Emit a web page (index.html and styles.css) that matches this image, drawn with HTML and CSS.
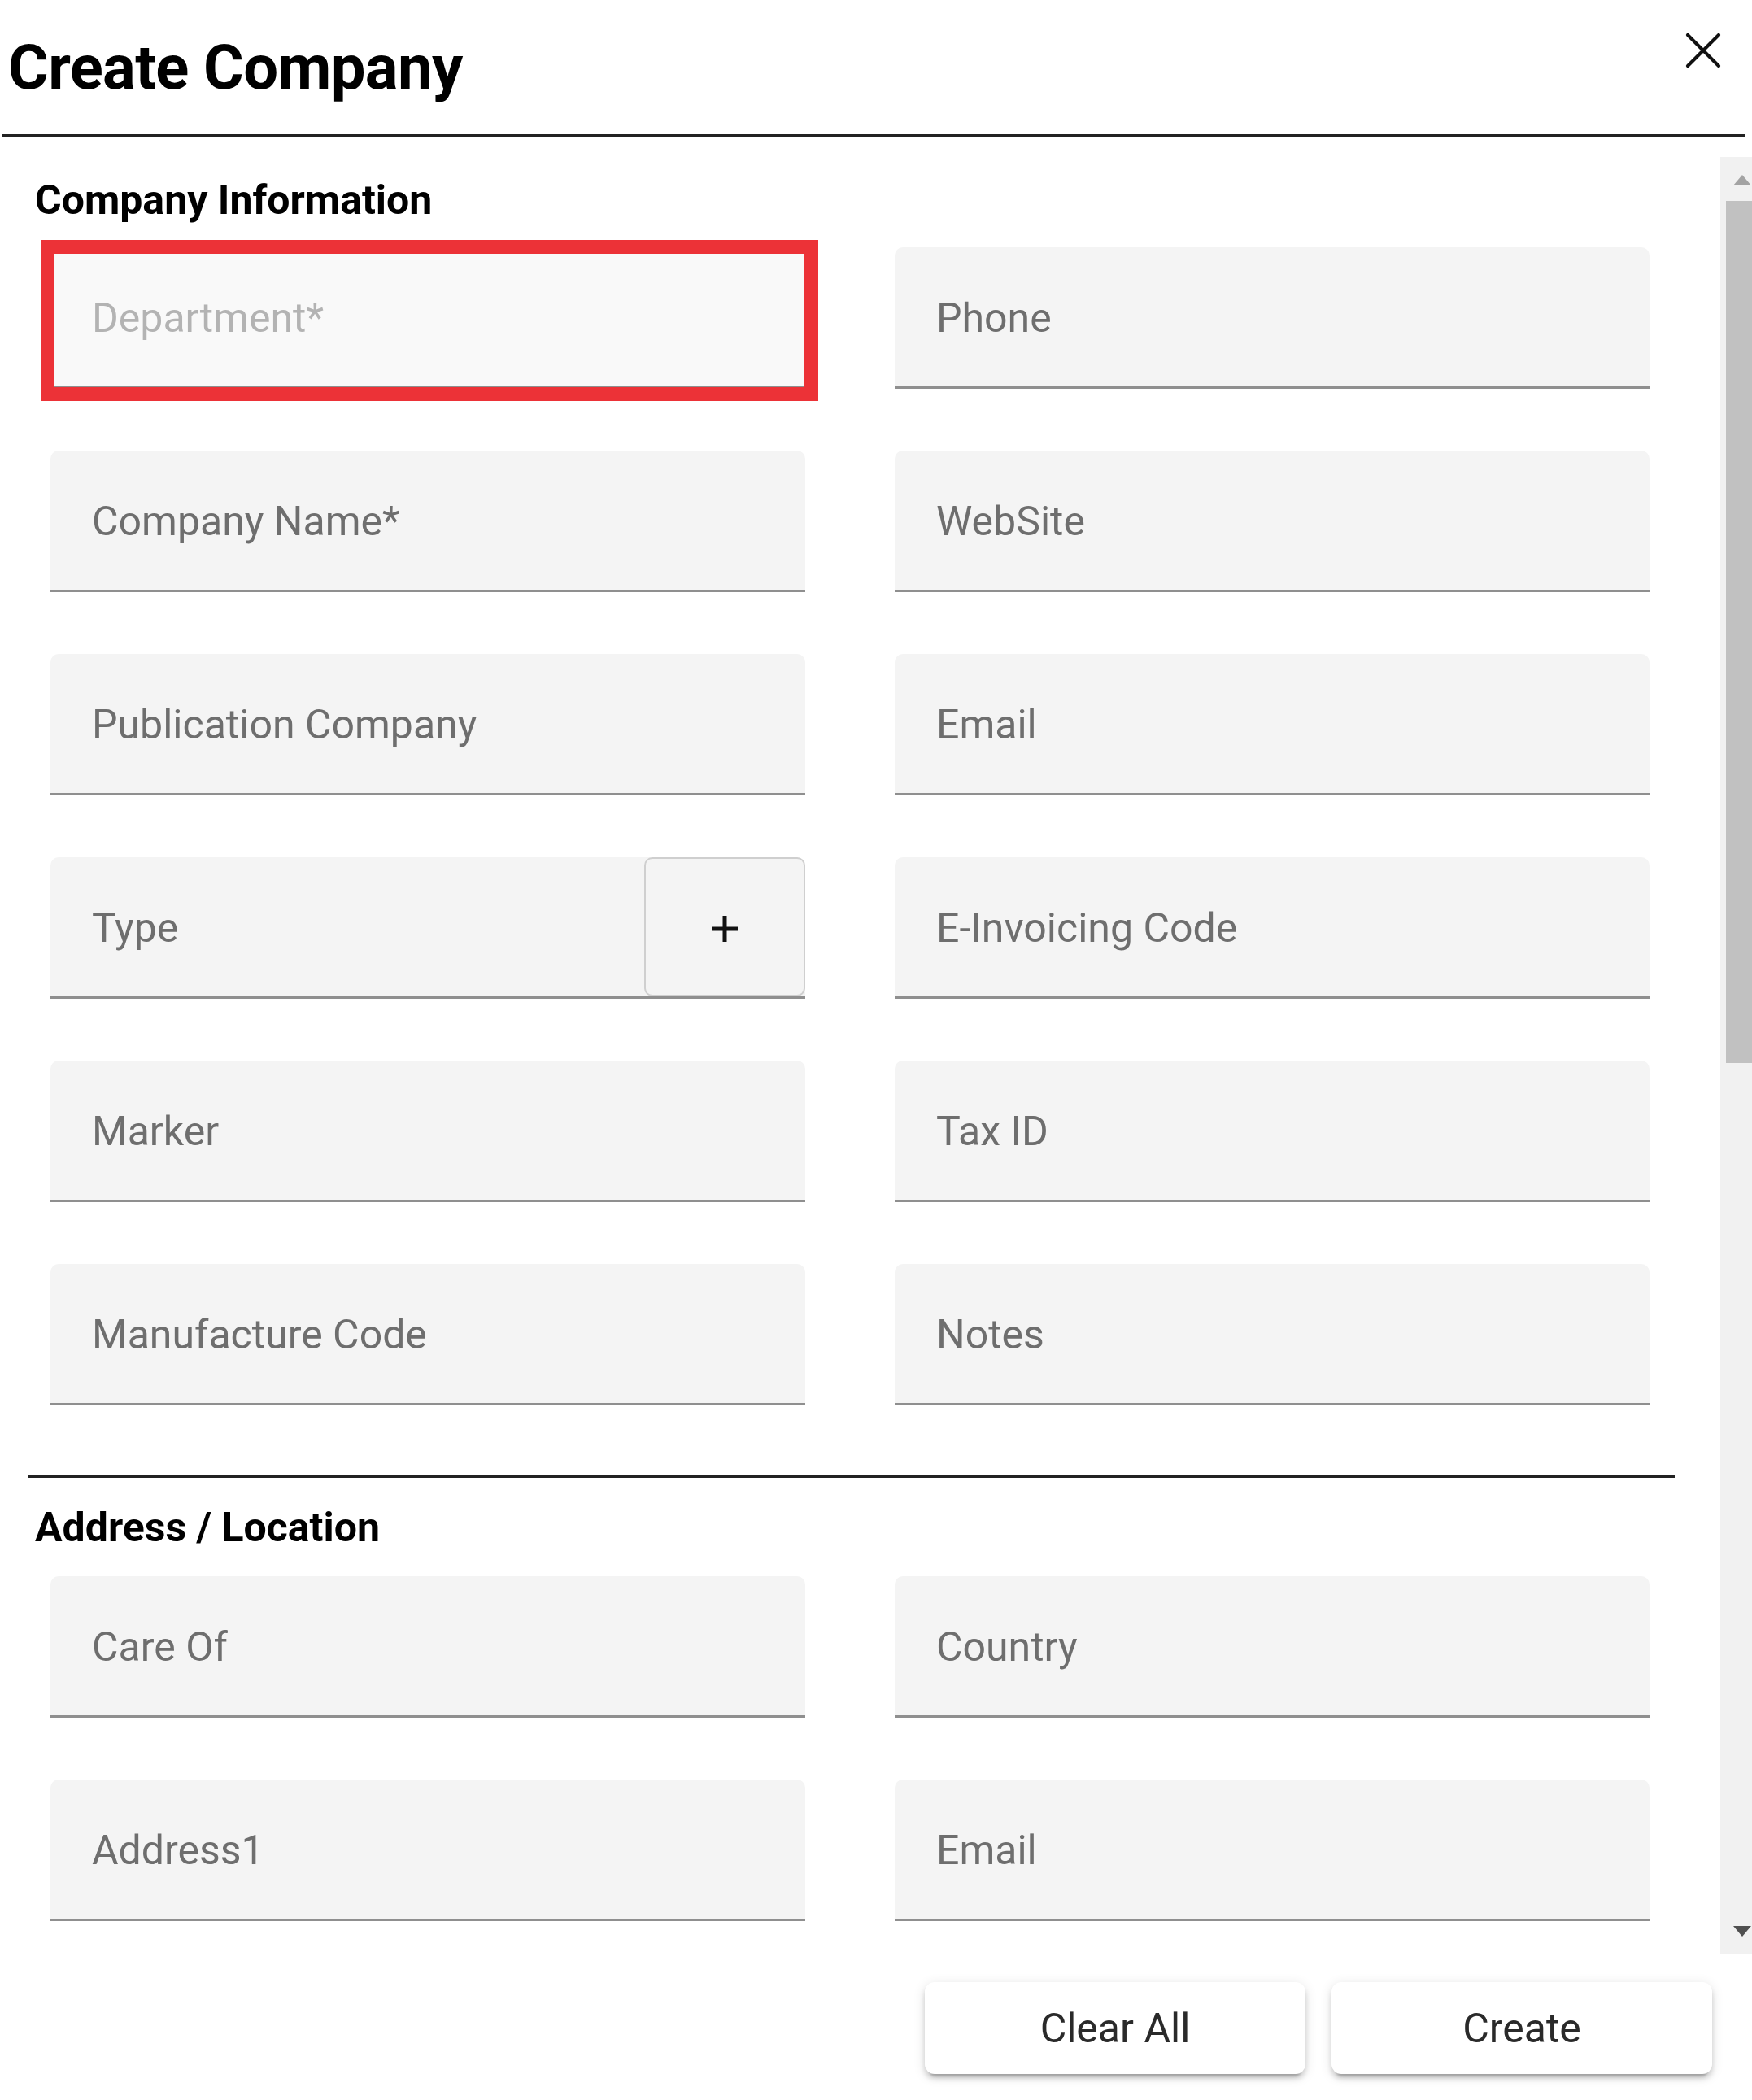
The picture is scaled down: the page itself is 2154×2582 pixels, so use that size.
FILE: index.html
```html
<!DOCTYPE html>
<html lang="en">
<head>
<meta charset="utf-8">
<title>Create Company</title>
<link rel="stylesheet" href="styles.css">
</head>
<body>
<div class="dialog">
  <header class="dlg-head">
    <h1 class="dlg-title">Create Company</h1>
    <button class="close-btn" aria-label="Close">
      <svg width="44" height="44" viewBox="0 0 44 44"><path d="M3 3 L41 41 M41 3 L3 41" stroke="#111" stroke-width="4.2" stroke-linecap="round" fill="none"/></svg>
    </button>
  </header>

  <div class="dlg-body">
    <div class="scroll-area">
      <h2 class="section-title">Company Information</h2>
      <div class="field-grid">
        <div class="field field-disabled">
          <span class="field-label">Department*</span>
          <span class="highlight-box"></span>
        </div>
        <div class="field"><span class="field-label">Phone</span></div>

        <div class="field"><span class="field-label">Company Name*</span></div>
        <div class="field"><span class="field-label">WebSite</span></div>

        <div class="field"><span class="field-label">Publication Company</span></div>
        <div class="field"><span class="field-label">Email</span></div>

        <div class="field">
          <span class="field-label">Type</span>
          <button class="add-btn" aria-label="Add type">
            <svg width="34" height="34" viewBox="0 0 34 34"><path d="M17 1 V33 M1 17 H33" stroke="#111" stroke-width="5" fill="none"/></svg>
          </button>
        </div>
        <div class="field"><span class="field-label">E-Invoicing Code</span></div>

        <div class="field"><span class="field-label">Marker</span></div>
        <div class="field"><span class="field-label">Tax ID</span></div>

        <div class="field"><span class="field-label">Manufacture Code</span></div>
        <div class="field"><span class="field-label">Notes</span></div>
      </div>

      <hr class="section-sep">

      <h2 class="section-title">Address / Location</h2>
      <div class="field-grid">
        <div class="field"><span class="field-label">Care Of</span></div>
        <div class="field"><span class="field-label">Country</span></div>

        <div class="field"><span class="field-label">Address1</span></div>
        <div class="field"><span class="field-label">Email</span></div>
      </div>
    </div>

    <div class="scrollbar">
      <div class="sb-up"><span class="tri-up"></span></div>
      <div class="sb-thumb"></div>
      <div class="sb-rest"></div>
      <div class="sb-down"><span class="tri-down"></span></div>
    </div>
  </div>

  <footer class="dlg-actions">
    <button class="action-btn">Clear All</button>
    <button class="action-btn">Create</button>
  </footer>
</div>
</body>
</html>
```

FILE: styles.css
```css
* { box-sizing: border-box; }

html, body {
  margin: 0;
  padding: 0;
  background: #ffffff;
}

body {
  font-family: Roboto, "Liberation Sans", Arial, sans-serif;
  color: #111;
  width: 2154px;
  height: 2582px;
  overflow: hidden;
}

.dialog {
  width: 2154px;
  display: flex;
  flex-direction: column;
}

/* Header */
.dlg-head {
  display: flex;
  justify-content: space-between;
  align-items: flex-start;
  height: 168px;
  margin: 0 9px 0 2px;
  padding-left: 8px;
  border-bottom: 3px solid #222;
}

.dlg-title {
  margin: 45px 0 0 0;
  font-size: 76px;
  line-height: 76px;
  font-weight: 700;
  color: #000;
  letter-spacing: -0.6px;
}

.close-btn {
  margin: 40px 29px 0 0;
  padding: 0;
  border: none;
  background: none;
  width: 44px;
  height: 44px;
  display: block;
}
.close-btn svg { display: block; }

/* Body */
.dlg-body {
  display: flex;
  padding-top: 25px;
}

.scroll-area {
  flex: 1;
  height: 2210px;
  margin-left: 35px;
  padding-top: 24px;
  overflow: hidden;
}

.section-title {
  margin: 0 0 29px 8px;
  font-size: 50px;
  line-height: 58px;
  font-weight: 700;
  color: #000;
}

.section-sep + .section-title {
  margin-bottom: 31px;
}

.field-grid {
  display: grid;
  grid-template-columns: 928px 928px;
  column-gap: 110px;
  row-gap: 76px;
  margin-left: 27px;
}

.field {
  position: relative;
  display: flex;
  align-items: center;
  height: 174px;
  background: #f4f4f4;
  border-bottom: 3px solid #8f8f8f;
  border-radius: 10px 10px 0 0;
}

.field-label {
  flex: 1;
  padding: 2px 0 0 51px;
  font-size: 50px;
  line-height: 58px;
  color: #6e6e6e;
}

.field-disabled {
  background: #f9f9f9;
}
.field-disabled .field-label {
  color: #b3b3b3;
}

.highlight-box {
  position: absolute;
  left: -12px;
  top: -9px;
  right: -16px;
  bottom: -18px;
  border: 17px solid #ec3237;
  pointer-events: none;
}

.add-btn {
  align-self: stretch;
  width: 198px;
  margin: 0;
  padding: 0;
  background: #f4f4f4;
  border: 2px solid #cfcfcf;
  border-radius: 10px;
  display: flex;
  align-items: center;
  justify-content: center;
}
.add-btn svg { display: block; margin-top: 4px; }

.section-sep {
  margin: 86px 56px 32px 0;
  border: none;
  border-top: 3px solid #222;
  height: 0;
}

/* Scrollbar */
.scrollbar {
  width: 39px;
  height: 2210px;
  background: #f1f1f1;
  display: flex;
  flex-direction: column;
  overflow: hidden;
}

.sb-up {
  height: 54px;
  padding: 22px 0 0 16px;
}
.tri-up {
  display: block;
  width: 0;
  height: 0;
  border-left: 11px solid transparent;
  border-right: 11px solid transparent;
  border-bottom: 13px solid #a3a3a3;
}

.sb-thumb {
  height: 1060px;
  margin-left: 7px;
  background: #c1c1c1;
}

.sb-rest { flex: 1; }

.sb-down {
  height: 56px;
  padding: 21px 0 0 16px;
}
.tri-down {
  display: block;
  width: 0;
  height: 0;
  border-left: 11px solid transparent;
  border-right: 11px solid transparent;
  border-top: 13px solid #505050;
}

/* Footer actions */
.dlg-actions {
  display: flex;
  justify-content: flex-end;
  gap: 32px;
  padding: 34px 49px 0 0;
}

.action-btn {
  width: 468px;
  height: 113px;
  margin: 0;
  padding: 0;
  background: #fff;
  border: none;
  border-radius: 12px;
  font-family: Roboto, "Liberation Sans", Arial, sans-serif;
  font-size: 50px;
  color: #2a2a2a;
  box-shadow: 0 9px 3px -6px rgba(0,0,0,0.2), 0 6px 6px 0 rgba(0,0,0,0.14), 0 3px 15px 0 rgba(0,0,0,0.12);
}
```
